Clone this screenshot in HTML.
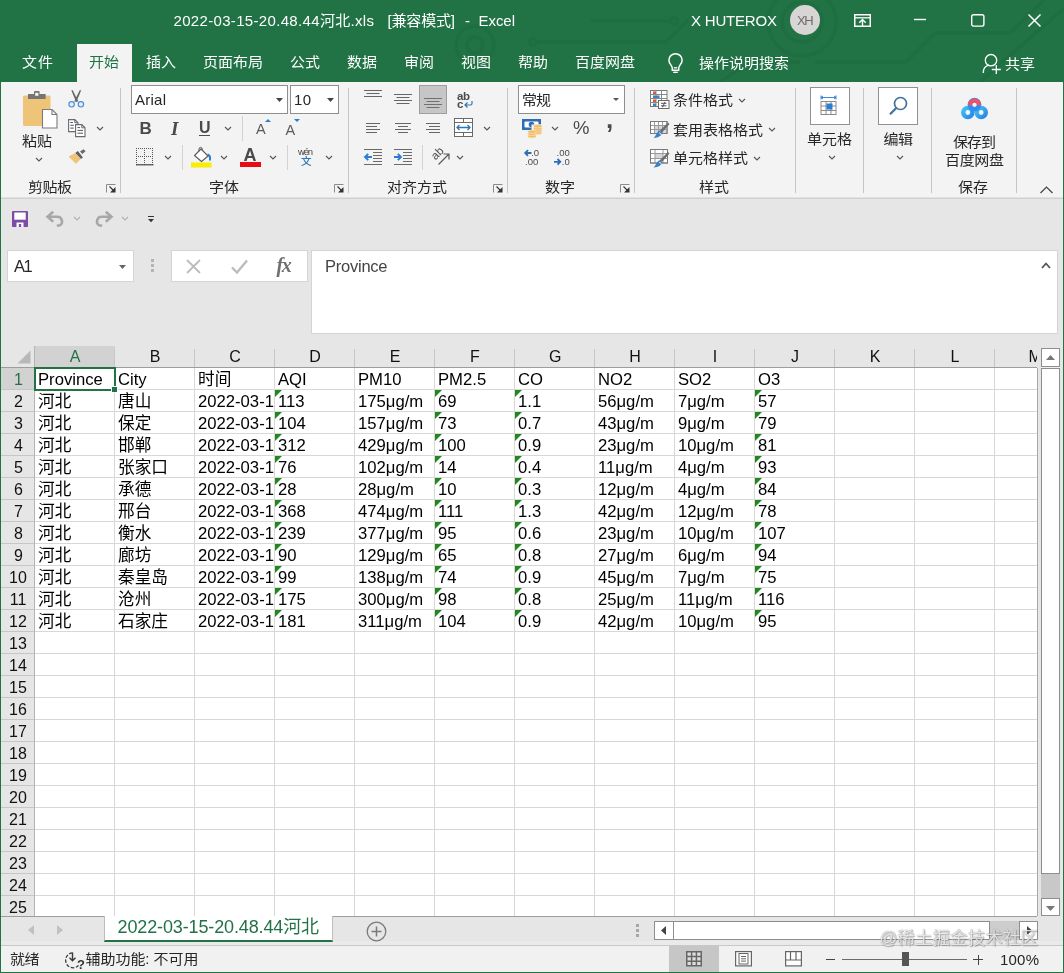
<!DOCTYPE html>
<html lang="zh-CN"><head><meta charset="utf-8"><title>Excel</title>
<style>
html,body{margin:0;padding:0;background:#217346;}
body{width:1064px;height:973px;overflow:hidden;font-family:"Liberation Sans","Noto Sans CJK SC",sans-serif;}
#app{will-change:transform;position:relative;width:1064px;height:973px;overflow:hidden;background:#e6e6e6;}
.a{position:absolute;box-sizing:border-box;display:block;}
.t{white-space:nowrap;}
svg.a{overflow:visible;}

</style></head>
<body>
<div id="app">
<div class="a " style="left:0px;top:0px;width:1064px;height:82px;background:#217346;"></div><div class="a " style="left:1px;top:82px;width:1063px;height:116px;background:#f3f3f3;"></div><div class="a " style="left:1px;top:197px;width:1063px;height:1px;background:#e2e2e2;"></div><div class="a " style="left:1px;top:198px;width:1063px;height:1px;background:#d0d0d0;"></div><div class="a " style="left:1px;top:199px;width:1063px;height:147px;background:#e6e6e6;"></div><div class="a " style="left:0px;top:0px;width:1px;height:973px;background:#217346;"></div><div class="a " style="left:0px;top:972px;width:1064px;height:1px;background:#217346;"></div><div class="a " style="left:1063px;top:82px;width:1px;height:891px;background:#217346;"></div><svg class="a" style="left:420px;top:0px;overflow:hidden;" width="644" height="82" viewBox="0 0 644 82"><g fill="none" stroke="#1c6a3e" stroke-width="3.500" opacity="0.550">
<circle cx="55" cy="45" r="19"/><circle cx="55" cy="45" r="8"/>
<circle cx="113" cy="42" r="3.500"/><path d="M117 42H246L268 20"/>
<path d="M170 21H250"/><circle cx="254" cy="21" r="3.500"/>
<circle cx="382" cy="22" r="34"/><circle cx="382" cy="22" r="20"/>
<path d="M395 62H486L515 33H590L624 0"/>
<path d="M300 82L330 62H380"/>
<path d="M560 82L644 8"/>
</g></svg><span class="a t" style="left:173.5px;top:10.0px;font-size:15px;line-height:21px;height:21px;color:#fff;letter-spacing:0.33px;">2022-03-15-20.48.44河北.xls</span><span class="a t" style="left:387.5px;top:10.0px;font-size:15px;line-height:21px;height:21px;color:#fff;letter-spacing:-0.17px;">[兼容模式]</span><span class="a t" style="left:465px;top:10.0px;font-size:15px;line-height:21px;height:21px;color:#fff;">-</span><span class="a t" style="left:478.5px;top:10.0px;font-size:15px;line-height:21px;height:21px;color:#fff;letter-spacing:-0.05px;">Excel</span><span class="a t" style="left:691px;top:10.0px;font-size:15px;line-height:21px;height:21px;color:#fff;letter-spacing:-0.19px;">X HUTEROX</span><div class="a " style="left:790px;top:5px;width:30px;height:30px;background:#d8d6d4;border-radius:50%;"></div><span class="a t" style="left:797px;top:11.5px;font-size:13px;line-height:18px;height:18px;color:#6e6c6a;letter-spacing:-1.50px;">XH</span><svg class="a" style="left:854px;top:13.5px;" width="17" height="13" viewBox="0 0 17 13"><rect x="0.750" y="0.750" width="15.500" height="11.500" fill="none" stroke="#fff" stroke-width="1.500"/><path d="M0.750 3.800H16.250" stroke="#fff" stroke-width="1.300"/><path d="M8.500 12V6M5.300 8.800L8.500 5.600L11.700 8.800" fill="none" stroke="#fff" stroke-width="1.400"/></svg><svg class="a" style="left:914px;top:18px;" width="12" height="3" viewBox="0 0 12 3"><path d="M0 1.500H12" stroke="#fff" stroke-width="1.400"/></svg><svg class="a" style="left:970.5px;top:13.5px;" width="14" height="13" viewBox="0 0 14 13"><rect x="0.700" y="0.700" width="12.200" height="11.400" rx="1.800" fill="none" stroke="#fff" stroke-width="1.400"/></svg><svg class="a" style="left:1028px;top:13.5px;" width="13" height="13" viewBox="0 0 13 13"><path d="M0.500 0.500L12.500 12.500M12.500 0.500L0.500 12.500" stroke="#fff" stroke-width="1.500"/></svg><div class="a " style="left:77px;top:44px;width:55px;height:38px;background:#f3f3f3;"></div><span class="a t" style="left:22px;top:51.0px;font-size:15px;line-height:21px;height:21px;color:#fff;letter-spacing:0.98px;transform:scaleY(0.930);">文件</span><span class="a t" style="left:89px;top:51.0px;font-size:15px;line-height:21px;height:21px;color:#217346;letter-spacing:-0.02px;transform:scaleY(0.930);">开始</span><span class="a t" style="left:146px;top:51.0px;font-size:15px;line-height:21px;height:21px;color:#fff;letter-spacing:-0.02px;transform:scaleY(0.930);">插入</span><span class="a t" style="left:203px;top:51.0px;font-size:15px;line-height:21px;height:21px;color:#fff;letter-spacing:-0.01px;transform:scaleY(0.930);">页面布局</span><span class="a t" style="left:290px;top:51.0px;font-size:15px;line-height:21px;height:21px;color:#fff;letter-spacing:-0.02px;transform:scaleY(0.930);">公式</span><span class="a t" style="left:347px;top:51.0px;font-size:15px;line-height:21px;height:21px;color:#fff;letter-spacing:-0.02px;transform:scaleY(0.930);">数据</span><span class="a t" style="left:404px;top:51.0px;font-size:15px;line-height:21px;height:21px;color:#fff;letter-spacing:-0.02px;transform:scaleY(0.930);">审阅</span><span class="a t" style="left:461px;top:51.0px;font-size:15px;line-height:21px;height:21px;color:#fff;letter-spacing:-0.02px;transform:scaleY(0.930);">视图</span><span class="a t" style="left:518px;top:51.0px;font-size:15px;line-height:21px;height:21px;color:#fff;letter-spacing:-0.02px;transform:scaleY(0.930);">帮助</span><span class="a t" style="left:575px;top:51.0px;font-size:15px;line-height:21px;height:21px;color:#fff;letter-spacing:-0.01px;transform:scaleY(0.930);">百度网盘</span><svg class="a" style="left:668px;top:53px;" width="15" height="20" viewBox="0 0 15 20"><path d="M7.500 0.800C3.800 0.800 0.900 3.600 0.900 7.200C0.900 9.600 2.200 11 3.300 12.600C4 13.600 4.300 14.600 4.300 15.600V17.200H10.700V15.600C10.700 14.600 11 13.600 11.700 12.600C12.800 11 14.100 9.600 14.100 7.200C14.100 3.600 11.200 0.800 7.500 0.800Z" fill="none" stroke="#fff" stroke-width="1.500"/><path d="M5.800 14.800h3.400" stroke="#fff" stroke-width="1.300"/><path d="M5.200 19.300h4.600" stroke="#fff" stroke-width="1.400"/></svg><span class="a t" style="left:699px;top:51.5px;font-size:15px;line-height:21px;height:21px;color:#fff;transform:scaleY(0.930);">操作说明搜索</span><svg class="a" style="left:982px;top:53px;" width="19" height="21" viewBox="0 0 19 21"><circle cx="9" cy="7.200" r="5.700" fill="none" stroke="#fff" stroke-width="1.300"/><path d="M1.200 20c0-4 2-6.800 5.300-7.800" fill="none" stroke="#fff" stroke-width="1.300"/><path d="M14.300 12v9M9.800 16.500h9" stroke="#fff" stroke-width="1.300"/></svg><span class="a t" style="left:1005px;top:52.5px;font-size:15px;line-height:21px;height:21px;color:#fff;letter-spacing:-0.02px;transform:scaleY(0.930);">共享</span><div class="a " style="left:120px;top:88px;width:1px;height:105px;background:#c6c6c6;"></div><div class="a " style="left:348px;top:88px;width:1px;height:105px;background:#c6c6c6;"></div><div class="a " style="left:507px;top:88px;width:1px;height:105px;background:#c6c6c6;"></div><div class="a " style="left:634px;top:88px;width:1px;height:105px;background:#c6c6c6;"></div><div class="a " style="left:795px;top:88px;width:1px;height:105px;background:#c6c6c6;"></div><div class="a " style="left:863px;top:88px;width:1px;height:105px;background:#c6c6c6;"></div><div class="a " style="left:931px;top:88px;width:1px;height:105px;background:#c6c6c6;"></div><div class="a " style="left:1016px;top:88px;width:1px;height:105px;background:#c6c6c6;"></div><div class="a " style="left:242px;top:116px;width:1px;height:25px;background:#d2d2d2;"></div><div class="a " style="left:182px;top:145px;width:1px;height:25px;background:#d2d2d2;"></div><div class="a " style="left:287px;top:145px;width:1px;height:25px;background:#d2d2d2;"></div><div class="a " style="left:422px;top:145px;width:1px;height:25px;background:#d2d2d2;"></div><span class="a t" style="left:28px;top:176.0px;font-size:15px;line-height:21px;height:21px;color:#262626;letter-spacing:-0.51px;transform:scaleY(0.930);">剪贴板</span><span class="a t" style="left:209px;top:176.0px;font-size:15px;line-height:21px;height:21px;color:#262626;letter-spacing:-0.02px;transform:scaleY(0.930);">字体</span><span class="a t" style="left:387px;top:176.0px;font-size:15px;line-height:21px;height:21px;color:#262626;letter-spacing:-0.01px;transform:scaleY(0.930);">对齐方式</span><span class="a t" style="left:545px;top:176.0px;font-size:15px;line-height:21px;height:21px;color:#262626;letter-spacing:-0.02px;transform:scaleY(0.930);">数字</span><span class="a t" style="left:699px;top:176.0px;font-size:15px;line-height:21px;height:21px;color:#262626;letter-spacing:-0.02px;transform:scaleY(0.930);">样式</span><span class="a t" style="left:958px;top:176.0px;font-size:15px;line-height:21px;height:21px;color:#262626;letter-spacing:-0.02px;transform:scaleY(0.930);">保存</span><svg class="a" style="left:106px;top:184px;" width="10" height="9" viewBox="0 0 10 9"><path d="M0.500 8.500V0.500H9.500" fill="none" stroke="#8a8a8a" stroke-width="1"/><path d="M3.500 2.500L8.500 7.500" fill="none" stroke="#333" stroke-width="1.100"/><path d="M9.500 3V8.500H4z" fill="#333"/></svg><svg class="a" style="left:334px;top:184px;" width="10" height="9" viewBox="0 0 10 9"><path d="M0.500 8.500V0.500H9.500" fill="none" stroke="#8a8a8a" stroke-width="1"/><path d="M3.500 2.500L8.500 7.500" fill="none" stroke="#333" stroke-width="1.100"/><path d="M9.500 3V8.500H4z" fill="#333"/></svg><svg class="a" style="left:493px;top:184px;" width="10" height="9" viewBox="0 0 10 9"><path d="M0.500 8.500V0.500H9.500" fill="none" stroke="#8a8a8a" stroke-width="1"/><path d="M3.500 2.500L8.500 7.500" fill="none" stroke="#333" stroke-width="1.100"/><path d="M9.500 3V8.500H4z" fill="#333"/></svg><svg class="a" style="left:620px;top:184px;" width="10" height="9" viewBox="0 0 10 9"><path d="M0.500 8.500V0.500H9.500" fill="none" stroke="#8a8a8a" stroke-width="1"/><path d="M3.500 2.500L8.500 7.500" fill="none" stroke="#333" stroke-width="1.100"/><path d="M9.500 3V8.500H4z" fill="#333"/></svg><svg class="a" style="left:23px;top:91px;" width="36" height="40" viewBox="0 0 36 40"><rect x="0" y="4.500" width="27.500" height="30.500" rx="1.500" fill="#eec478"/>
<path d="M5 3h6v-2a1 1 0 0 1 1-1h3.600a1 1 0 0 1 1 1v2h6v5h-17.600z" fill="#757575"/>
<rect x="12.200" y="1.800" width="3.200" height="3" fill="#f3f3f3"/>
<path d="M19.500 18.500h9.500l5 5v13.500h-14.500z" fill="#fff" stroke="#7a7a7a" stroke-width="1.100"/>
<path d="M29 18.500v5h5" fill="none" stroke="#7a7a7a" stroke-width="1.100"/></svg><span class="a t" style="left:22px;top:129.5px;font-size:15px;line-height:21px;height:21px;color:#262626;letter-spacing:-0.02px;transform:scaleY(0.930);">粘贴</span><svg class="a" style="left:34.5px;top:156.5px;" width="8" height="5" viewBox="0 0 8 5"><path d="M1 1 L4.0 4 L7 1" fill="none" stroke="#555" stroke-width="1.1"/></svg><svg class="a" style="left:68px;top:90px;" width="17" height="19" viewBox="0 0 17 19"><path d="M3.300 0.300L4.800 0.300L10.300 11.500L8 11.800z" fill="#666"/><path d="M13.200 0.300L11.700 0.300L6.200 11.500L8.500 11.800z" fill="#666"/>
<circle cx="3.600" cy="14.300" r="2.700" fill="#e3eefa" stroke="#4f8fd6" stroke-width="1.200"/>
<circle cx="12.900" cy="14.300" r="2.700" fill="#e3eefa" stroke="#4f8fd6" stroke-width="1.200"/></svg><svg class="a" style="left:68px;top:119px;" width="18" height="18" viewBox="0 0 18 18"><path d="M0.600 0.600h6.200l3.200 3.200v8.800h-9.400z" fill="#fff" stroke="#6a6a6a" stroke-width="1.100"/>
<path d="M6.800 0.600v3.200h3.200" fill="none" stroke="#6a6a6a" stroke-width="1"/>
<path d="M2.300 3.500h2.600M2.300 6.300h3.500M2.300 9.100h3.500" stroke="#44546a" stroke-width="1"/>
<path d="M7.600 5.600h6.200l3.200 3.200v8.800h-9.400z" fill="#fff" stroke="#6a6a6a" stroke-width="1.100"/>
<path d="M13.800 5.600v3.200h3.200" fill="none" stroke="#6a6a6a" stroke-width="1"/>
<path d="M9.500 8.600h2.600M9.500 11.400h5.500M9.500 14.200h5.500" stroke="#44546a" stroke-width="1"/></svg><svg class="a" style="left:96.0px;top:125.5px;" width="8" height="5" viewBox="0 0 8 5"><path d="M1 1 L4.0 4 L7 1" fill="none" stroke="#555" stroke-width="1.1"/></svg><svg class="a" style="left:68px;top:149px;" width="18" height="16" viewBox="0 0 18 16"><path d="M12 2.600L15.500 0.200L17.600 2.300L14.300 5z" fill="#6a6a6a"/>
<path d="M7.200 4.100L9.900 2L14.900 8.600L12.900 10.100z" fill="#5f5f5f"/>
<path d="M7.200 4.100L12.900 10.100L7.800 14.800L0.600 7.400z" fill="#eec478"/></svg><div class="a " style="left:131px;top:85px;width:157px;height:29px;background:#fff;border:1px solid #8e8e8e;"></div><span class="a t" style="left:135px;top:89.0px;font-size:15px;line-height:21px;height:21px;color:#262626;letter-spacing:0.25px;">Arial</span><svg class="a" style="left:275.5px;top:97.5px;" width="7" height="4" viewBox="0 0 7 4"><path d="M0 0 L7 0 L3.5 4Z" fill="#444"/></svg><div class="a " style="left:290px;top:85px;width:49px;height:29px;background:#fff;border:1px solid #8e8e8e;"></div><span class="a t" style="left:294px;top:89.0px;font-size:15px;line-height:21px;height:21px;color:#262626;letter-spacing:0.31px;">10</span><svg class="a" style="left:326.5px;top:97.5px;" width="7" height="4" viewBox="0 0 7 4"><path d="M0 0 L7 0 L3.5 4Z" fill="#444"/></svg><span class="a t" style="left:139.5px;top:117.0px;font-size:17px;line-height:24px;height:24px;color:#4a4a4a;font-weight:bold;">B</span><span class="a t" style="left:171px;top:115.0px;font-size:19px;line-height:27px;height:27px;color:#4a4a4a;font-weight:bold;font-style:italic;font-family:'Liberation Serif',serif;">I</span><span class="a t" style="left:199px;top:117.0px;font-size:16px;line-height:22px;height:22px;color:#4a4a4a;font-weight:bold;">U</span><div class="a " style="left:199px;top:135px;width:11px;height:1.3px;background:#4a4a4a;"></div><svg class="a" style="left:224.0px;top:125.5px;" width="8" height="5" viewBox="0 0 8 5"><path d="M1 1 L4.0 4 L7 1" fill="none" stroke="#555" stroke-width="1.1"/></svg><span class="a t" style="left:256px;top:119.0px;font-size:14.5px;line-height:20px;height:20px;color:#5a5a5a;">A</span><svg class="a" style="left:264.5px;top:119px;" width="6" height="3" viewBox="0 0 6 3"><path d="M0 3L3 0L6 3z" fill="#2b7cd3"/></svg><span class="a t" style="left:285.5px;top:120.0px;font-size:14.5px;line-height:20px;height:20px;color:#5a5a5a;">A</span><svg class="a" style="left:293.5px;top:119px;" width="6" height="3" viewBox="0 0 6 3"><path d="M0 0L3 3L6 0z" fill="#2b7cd3"/></svg><svg class="a" style="left:136px;top:147.5px;" width="18" height="18" viewBox="0 0 18 18"><path d="M0.500 0V17M8.500 0V17M16.500 0V17M0 0.500H17M0 8.500H17" fill="none" stroke="#555" stroke-width="1" stroke-dasharray="1 1"/><path d="M0 16.800H17.500" stroke="#444" stroke-width="1.200"/></svg><svg class="a" style="left:164.0px;top:154.5px;" width="8" height="5" viewBox="0 0 8 5"><path d="M1 1 L4.0 4 L7 1" fill="none" stroke="#555" stroke-width="1.1"/></svg><svg class="a" style="left:191px;top:146.5px;" width="21" height="21" viewBox="0 0 21 21"><rect x="0" y="15.500" width="20.500" height="5" fill="#f8ee00"/>
<path d="M3.500 8.500L10 2L17 9L10.500 14.500z" fill="#fff" stroke="#5a5a5a" stroke-width="1.100" stroke-linejoin="round"/>
<path d="M8 4.300V2a1.600 1.600 0 0 1 3.200 0V3" fill="none" stroke="#5a5a5a" stroke-width="1"/>
<path d="M16.500 7.500c2.500 1 3 3.500 2.300 6" fill="none" stroke="#2b7cd3" stroke-width="2"/></svg><svg class="a" style="left:220.0px;top:154.5px;" width="8" height="5" viewBox="0 0 8 5"><path d="M1 1 L4.0 4 L7 1" fill="none" stroke="#555" stroke-width="1.1"/></svg><span class="a t" style="left:243.5px;top:142.5px;font-size:18px;line-height:25px;height:25px;color:#4a4a4a;font-weight:bold;">A</span><div class="a " style="left:240px;top:162px;width:20.5px;height:5px;background:#ea0a14;"></div><svg class="a" style="left:269.0px;top:154.5px;" width="8" height="5" viewBox="0 0 8 5"><path d="M1 1 L4.0 4 L7 1" fill="none" stroke="#555" stroke-width="1.1"/></svg><span class="a t" style="left:298px;top:145.0px;font-size:9.5px;line-height:13px;height:13px;color:#444;letter-spacing:-1.22px;">wén</span><span class="a t" style="left:301px;top:154.0px;font-size:10.5px;line-height:15px;height:15px;color:#2e75b6;font-weight:500;">文</span><svg class="a" style="left:325.0px;top:154.5px;" width="8" height="5" viewBox="0 0 8 5"><path d="M1 1 L4.0 4 L7 1" fill="none" stroke="#555" stroke-width="1.1"/></svg><svg class="a" style="left:364px;top:90px;" width="18" height="9" viewBox="0 0 18 9"><path d="M0.0 0.5H18.0" stroke="#666" stroke-width="1"/><path d="M2.5 3.5H15.5" stroke="#666" stroke-width="1"/><path d="M0.0 6.5H18.0" stroke="#666" stroke-width="1"/></svg><svg class="a" style="left:394px;top:94px;" width="18" height="12" viewBox="0 0 18 12"><path d="M0.0 0.5H18.0" stroke="#666" stroke-width="1"/><path d="M2.5 3.5H15.5" stroke="#666" stroke-width="1"/><path d="M0.0 6.5H18.0" stroke="#666" stroke-width="1"/><path d="M2.5 9.5H15.5" stroke="#666" stroke-width="1"/></svg><div class="a " style="left:419px;top:85px;width:28px;height:29px;background:#c6c6c6;border:1px solid #9e9e9e;"></div><svg class="a" style="left:424px;top:98px;" width="18" height="12" viewBox="0 0 18 12"><path d="M0.0 0.5H18.0" stroke="#707070" stroke-width="1"/><path d="M2.5 3.5H15.5" stroke="#707070" stroke-width="1"/><path d="M0.0 6.5H18.0" stroke="#707070" stroke-width="1"/><path d="M2.5 9.5H15.5" stroke="#707070" stroke-width="1"/></svg><span class="a t" style="left:457px;top:87.5px;font-size:11.5px;line-height:16px;height:16px;color:#4a4a4a;font-weight:bold;letter-spacing:-0.42px;">ab</span><span class="a t" style="left:457px;top:95.5px;font-size:11.5px;line-height:16px;height:16px;color:#4a4a4a;font-weight:bold;">c</span><svg class="a" style="left:464px;top:100.5px;" width="9" height="7" viewBox="0 0 9 7"><path d="M8 0v2.500a1.500 1.500 0 0 1-1.500 1.500H1.200M3.500 1.500L1 4L3.500 6.500" fill="none" stroke="#2e75b6" stroke-width="1.200"/></svg><svg class="a" style="left:366px;top:123px;" width="14" height="12" viewBox="0 0 14 12"><path d="M0 0.5H14" stroke="#666" stroke-width="1"/><path d="M0 3.5H11" stroke="#666" stroke-width="1"/><path d="M0 6.5H14" stroke="#666" stroke-width="1"/><path d="M0 9.5H11" stroke="#666" stroke-width="1"/></svg><svg class="a" style="left:395px;top:123px;" width="16" height="12" viewBox="0 0 16 12"><path d="M0.0 0.5H16.0" stroke="#666" stroke-width="1"/><path d="M3.0 3.5H13.0" stroke="#666" stroke-width="1"/><path d="M0.0 6.5H16.0" stroke="#666" stroke-width="1"/><path d="M3.0 9.5H13.0" stroke="#666" stroke-width="1"/></svg><svg class="a" style="left:426px;top:123px;" width="14" height="12" viewBox="0 0 14 12"><path d="M0 0.5H14" stroke="#666" stroke-width="1"/><path d="M3 3.5H14" stroke="#666" stroke-width="1"/><path d="M0 6.5H14" stroke="#666" stroke-width="1"/><path d="M3 9.5H14" stroke="#666" stroke-width="1"/></svg><svg class="a" style="left:454px;top:118px;" width="19" height="19" viewBox="0 0 19 19"><rect x="0.500" y="0.500" width="18" height="18" fill="#fff" stroke="#6a6a6a" stroke-width="1"/>
<path d="M0.500 4.500h18M0.500 14.500h18M9.500 0.500v4M9.500 14.500v4" stroke="#6a6a6a" stroke-width="1"/>
<path d="M3 9.500h13M5.500 7L3 9.500L5.500 12M13.500 7L16 9.500L13.500 12" fill="none" stroke="#2e75b6" stroke-width="1.300"/></svg><svg class="a" style="left:483.0px;top:125.5px;" width="8" height="5" viewBox="0 0 8 5"><path d="M1 1 L4.0 4 L7 1" fill="none" stroke="#555" stroke-width="1.1"/></svg><svg class="a" style="left:364px;top:148.5px;" width="18" height="16" viewBox="0 0 18 16"><path d="M0 0.500h18M9 3.500h9M9 6.500h9M9 9.500h9M9 12.500h9M0 15.500h18" stroke="#6a6a6a" stroke-width="1"/>
<path d="M8 8H1M4.200 4.800L1 8L4.200 11.200" fill="none" stroke="#2b7cd3" stroke-width="1.900"/></svg><svg class="a" style="left:394px;top:148.5px;" width="18" height="16" viewBox="0 0 18 16"><path d="M0 0.500h18M9 3.500h9M9 6.500h9M9 9.500h9M9 12.500h9M0 15.500h18" stroke="#6a6a6a" stroke-width="1"/>
<path d="M0 8H7M3.800 4.800L7 8L3.800 11.200" fill="none" stroke="#2b7cd3" stroke-width="1.900"/></svg><svg class="a" style="left:430px;top:147px;" width="20" height="20" viewBox="0 0 20 20"><text x="0" y="0" font-size="11.500" fill="#4a4a4a" transform="translate(5.500 13.500) rotate(-45)" font-family="Liberation Sans,sans-serif">ab</text>
<path d="M8.500 17.500L18.500 7.500M13.500 7H19V12.500" fill="none" stroke="#5a5a5a" stroke-width="1.200"/></svg><svg class="a" style="left:456.0px;top:154.5px;" width="8" height="5" viewBox="0 0 8 5"><path d="M1 1 L4.0 4 L7 1" fill="none" stroke="#555" stroke-width="1.1"/></svg><div class="a " style="left:518px;top:85px;width:107px;height:29px;background:#fff;border:1px solid #8e8e8e;"></div><span class="a t" style="left:522px;top:89.0px;font-size:15px;line-height:21px;height:21px;color:#262626;letter-spacing:-1.02px;transform:scaleY(0.930);">常规</span><svg class="a" style="left:613.0px;top:98.0px;" width="6" height="3" viewBox="0 0 6 3"><path d="M0 0 L6 0 L3.0 3Z" fill="#555"/></svg><svg class="a" style="left:522px;top:119px;" width="21" height="20" viewBox="0 0 21 20"><rect x="0" y="0" width="19" height="11" fill="#2e6db5"/>
<rect x="2.500" y="2.500" width="14" height="6" rx="1" fill="#fff"/>
<ellipse cx="9.500" cy="5.500" rx="2.800" ry="2.800" fill="#2e6db5"/>
<rect x="9.500" y="5.500" width="11" height="6" fill="#f3f3f3"/><ellipse cx="15.7" cy="13.8" rx="4.200" ry="1.700" fill="#f2bd69" stroke="#f9e3bd" stroke-width="0.700"/><ellipse cx="15.7" cy="11.600000000000001" rx="4.200" ry="1.700" fill="#f2bd69" stroke="#f9e3bd" stroke-width="0.700"/><ellipse cx="15.7" cy="9.4" rx="4.200" ry="1.700" fill="#f2bd69" stroke="#f9e3bd" stroke-width="0.700"/><ellipse cx="15.7" cy="7.2" rx="4.200" ry="1.700" fill="#f2bd69" stroke="#f9e3bd" stroke-width="0.700"/><ellipse cx="10" cy="17.2" rx="4.200" ry="1.700" fill="#f2bd69" stroke="#f9e3bd" stroke-width="0.700"/><ellipse cx="10" cy="15.0" rx="4.200" ry="1.700" fill="#f2bd69" stroke="#f9e3bd" stroke-width="0.700"/><ellipse cx="10" cy="12.799999999999999" rx="4.200" ry="1.700" fill="#f2bd69" stroke="#f9e3bd" stroke-width="0.700"/></svg><svg class="a" style="left:550.5px;top:126.0px;" width="8" height="5" viewBox="0 0 8 5"><path d="M1 1 L4.0 4 L7 1" fill="none" stroke="#555" stroke-width="1.1"/></svg><span class="a t" style="left:573px;top:115.0px;font-size:18.5px;line-height:26px;height:26px;color:#4a4a4a;">%</span><span class="a t" style="left:606px;top:101.0px;font-size:26px;line-height:36px;height:36px;color:#4a4a4a;font-weight:bold;">,</span><svg class="a" style="left:524px;top:149px;" width="17" height="18" viewBox="0 0 17 18"><path d="M7.500 4H1.200M4 1.200L1.200 4L4 6.800" fill="none" stroke="#2e6db5" stroke-width="1.800"/>
<text x="7.200" y="6.800" font-size="9.500" fill="#4a4a4a" font-family="Liberation Sans,sans-serif">.0</text>
<text x="1" y="16" font-size="9.500" fill="#4a4a4a" font-family="Liberation Sans,sans-serif">.00</text></svg><svg class="a" style="left:554px;top:149px;" width="17" height="18" viewBox="0 0 17 18"><text x="2.500" y="6.800" font-size="9.500" fill="#4a4a4a" font-family="Liberation Sans,sans-serif">.00</text>
<path d="M0 12.800H6.300M3.500 10L6.300 12.800L3.500 15.600" fill="none" stroke="#2e6db5" stroke-width="1.800"/>
<text x="7.800" y="16" font-size="9.500" fill="#4a4a4a" font-family="Liberation Sans,sans-serif">.0</text></svg><svg class="a" style="left:650px;top:90px;" width="20" height="19" viewBox="0 0 20 19"><rect x="0.500" y="0.500" width="16.500" height="16" fill="#fff" stroke="#7a7a7a" stroke-width="1"/>
<path d="M0.500 4.500h16.500M0.500 8.500h16.500M0.500 12.500h16.500M6 0.500v16M11.500 0.500v16" stroke="#8a8a8a" stroke-width="1"/>
<rect x="3" y="1.500" width="3" height="2.500" fill="#d9593a"/><rect x="3" y="5.500" width="6.500" height="2.500" fill="#3f7fc1"/><rect x="3" y="9.500" width="3" height="2.500" fill="#d9593a"/><rect x="3" y="13.500" width="3" height="2.500" fill="#3f7fc1"/>
<rect x="8.500" y="10.500" width="10.500" height="8" fill="#fff" stroke="#6a6a6a" stroke-width="1"/>
<path d="M11 13.300h5.500M11 15.800h5.500M15 11.800L12.500 17.300" stroke="#444" stroke-width="0.900"/></svg><span class="a t" style="left:673px;top:89.0px;font-size:15px;line-height:21px;height:21px;color:#262626;letter-spacing:-0.01px;transform:scaleY(0.930);">条件格式</span><svg class="a" style="left:738.0px;top:97.5px;" width="8" height="5" viewBox="0 0 8 5"><path d="M1 1 L4.0 4 L7 1" fill="none" stroke="#555" stroke-width="1.1"/></svg><svg class="a" style="left:650px;top:121px;" width="21" height="18" viewBox="0 0 21 18"><rect x="0.500" y="0.500" width="16.500" height="12" fill="#fff" stroke="#7a7a7a" stroke-width="1"/>
<rect x="5" y="4.500" width="11.500" height="7.500" fill="#d3d7dd"/>
<path d="M0.500 4.500h16.500M0.500 8.500h16.500M4.500 0.500v12M8.500 0.500v12M12.500 0.500v12" stroke="#9a9a9a" stroke-width="1"/>
<rect x="0.500" y="0.500" width="16.500" height="12" fill="none" stroke="#7a7a7a" stroke-width="1"/><path d="M18.0 1.5L19.5 3.0L12.0 11.5L9.5 10.0z" fill="#6e6e6e"/>
<path d="M9.5 9.7L12.3 11.7C12.0 14.5 8.5 16.5 3.5 17.0C6.0 15.0 6.5 11.0 9.5 9.7z" fill="#3f7fc1"/>
<path d="M9.0 12.0a1.600 1.600 0 0 1 2 2" fill="none" stroke="#f3f3f3" stroke-width="1"/></svg><span class="a t" style="left:673px;top:118.5px;font-size:15px;line-height:21px;height:21px;color:#262626;transform:scaleY(0.930);">套用表格格式</span><svg class="a" style="left:768.0px;top:126.5px;" width="8" height="5" viewBox="0 0 8 5"><path d="M1 1 L4.0 4 L7 1" fill="none" stroke="#555" stroke-width="1.1"/></svg><svg class="a" style="left:650px;top:148.5px;" width="21" height="19" viewBox="0 0 21 19"><rect x="0.500" y="0.500" width="17" height="13.500" fill="#fff" stroke="#7a7a7a" stroke-width="1"/>
<rect x="5" y="4.500" width="8" height="5" fill="#d3d7dd"/>
<path d="M0.500 4.500h17M0.500 9.500h17M5 0.500v13.500M13 0.500v13.500" stroke="#9a9a9a" stroke-width="1"/>
<rect x="0.500" y="0.500" width="17" height="13.500" fill="none" stroke="#7a7a7a" stroke-width="1"/><path d="M18.0 3L19.5 4.5L12.0 13L9.5 11.5z" fill="#6e6e6e"/>
<path d="M9.5 11.2L12.3 13.2C12.0 16 8.5 18 3.5 18.5C6.0 16.5 6.5 12.5 9.5 11.2z" fill="#3f7fc1"/>
<path d="M9.0 13.5a1.600 1.600 0 0 1 2 2" fill="none" stroke="#f3f3f3" stroke-width="1"/></svg><span class="a t" style="left:673px;top:147.0px;font-size:15px;line-height:21px;height:21px;color:#262626;transform:scaleY(0.930);">单元格样式</span><svg class="a" style="left:753.0px;top:155.5px;" width="8" height="5" viewBox="0 0 8 5"><path d="M1 1 L4.0 4 L7 1" fill="none" stroke="#555" stroke-width="1.1"/></svg><div class="a " style="left:810px;top:87px;width:40px;height:38px;background:#fff;border:1px solid #919191;"></div><svg class="a" style="left:820px;top:95px;" width="20" height="22" viewBox="0 0 20 22"><path d="M1 2.500h15M1 0.500v4M16 0.500v4M3 1L1 2.500L3 4M14 1L16 2.500L14 4" fill="none" stroke="#2b7cd3" stroke-width="0.900"/>
<rect x="1" y="6.500" width="15" height="13" fill="#fff" stroke="#8a8a8a" stroke-width="1"/>
<path d="M1 11h15M1 15.500h15M6 6.500v13M11 6.500v13" stroke="#8a8a8a" stroke-width="1"/>
<rect x="6.500" y="8.500" width="6" height="6" fill="#2b7cd3"/></svg><span class="a t" style="left:807px;top:128.0px;font-size:15px;line-height:21px;height:21px;color:#262626;letter-spacing:-0.01px;transform:scaleY(0.930);">单元格</span><svg class="a" style="left:828.0px;top:155.0px;" width="8" height="5" viewBox="0 0 8 5"><path d="M1 1 L4.0 4 L7 1" fill="none" stroke="#555" stroke-width="1.1"/></svg><div class="a " style="left:878px;top:87px;width:40px;height:38px;background:#fff;border:1px solid #919191;"></div><svg class="a" style="left:889px;top:96px;" width="18" height="20" viewBox="0 0 18 20"><circle cx="11.500" cy="7.500" r="6" fill="none" stroke="#41719c" stroke-width="1.700"/><path d="M7.300 12L1 18.300" stroke="#41719c" stroke-width="2.200"/></svg><span class="a t" style="left:883.5px;top:128.0px;font-size:15px;line-height:21px;height:21px;color:#262626;letter-spacing:-0.52px;transform:scaleY(0.930);">编辑</span><svg class="a" style="left:896.0px;top:155.0px;" width="8" height="5" viewBox="0 0 8 5"><path d="M1 1 L4.0 4 L7 1" fill="none" stroke="#555" stroke-width="1.1"/></svg><svg class="a" style="left:961px;top:97px;" width="27" height="23" viewBox="0 0 27 23"><defs><linearGradient id="bd" x1="0" y1="0" x2="1" y2="1"><stop offset="0" stop-color="#3ec3f0"/><stop offset="1" stop-color="#2b86e8"/></linearGradient></defs>
<circle cx="6.800" cy="15.500" r="4.600" fill="none" stroke="url(#bd)" stroke-width="4.400"/>
<circle cx="20.200" cy="15.500" r="4.600" fill="none" stroke="url(#bd)" stroke-width="4.400"/>
<circle cx="13.500" cy="7.600" r="4.600" fill="none" stroke="#2f8ff0" stroke-width="4.400"/>
<path d="M8.900 8.200a4.600 4.600 0 0 1 9.200 0" fill="none" stroke="#ef5166" stroke-width="4.400"/>
<path d="M9.600 12.500L12 9.800M17.400 12.500L15 9.800" stroke="#2f8ff0" stroke-width="3.500"/></svg><span class="a t" style="left:953px;top:130.5px;font-size:15px;line-height:21px;height:21px;color:#262626;letter-spacing:-1.01px;transform:scaleY(0.930);">保存到</span><span class="a t" style="left:945px;top:149.0px;font-size:15px;line-height:21px;height:21px;color:#262626;letter-spacing:-0.34px;transform:scaleY(0.930);">百度网盘</span><svg class="a" style="left:1040px;top:186px;" width="13" height="8" viewBox="0 0 13 8"><path d="M0.500 7L6.500 1L12.500 7" fill="none" stroke="#444" stroke-width="1.200"/></svg><svg class="a" style="left:12px;top:211px;" width="16" height="16" viewBox="0 0 16 16"><rect x="0" y="0" width="16" height="16" rx="0.800" fill="#7d4ba3"/>
<rect x="2.300" y="1.500" width="11.400" height="7.200" fill="#fff"/>
<rect x="4.500" y="11.500" width="7" height="4.500" fill="#fff"/><rect x="6.800" y="13" width="2.400" height="3" fill="#7d4ba3"/></svg><svg class="a" style="left:46px;top:211px;" width="19" height="16" viewBox="0 0 19 16"><path d="M3 5.800h8.500a4.600 4.600 0 0 1 2.500 8.400l-3.200 0.600" fill="none" stroke="#a8a8a8" stroke-width="2.600" stroke-linejoin="round"/>
<path d="M7.200 0.800L1.500 5.800L7.200 10.800" fill="none" stroke="#a8a8a8" stroke-width="2.600"/></svg><svg class="a" style="left:72.5px;top:216.0px;" width="8" height="5" viewBox="0 0 8 5"><path d="M1 1 L4.0 4 L7 1" fill="none" stroke="#b0b0b0" stroke-width="1.1"/></svg><svg class="a" style="left:94px;top:211px;" width="19" height="16" viewBox="0 0 19 16"><path d="M16 5.800h-8.500a4.600 4.600 0 0 0 -2.500 8.400l3.200 0.600" fill="none" stroke="#a8a8a8" stroke-width="2.600" stroke-linejoin="round"/>
<path d="M11.800 0.800L17.500 5.800L11.800 10.800" fill="none" stroke="#a8a8a8" stroke-width="2.600"/></svg><svg class="a" style="left:121.0px;top:216.0px;" width="8" height="5" viewBox="0 0 8 5"><path d="M1 1 L4.0 4 L7 1" fill="none" stroke="#b0b0b0" stroke-width="1.1"/></svg><div class="a " style="left:147.5px;top:215.5px;width:6px;height:1.2px;background:#333;"></div><svg class="a" style="left:147.5px;top:218.70000000000002px;" width="6" height="3.2" viewBox="0 0 6 3.2"><path d="M0 0 L6 0 L3.0 3.2Z" fill="#333"/></svg><div class="a " style="left:7px;top:250px;width:127px;height:32px;background:#fff;border:1px solid #d4d4d4;"></div><span class="a t" style="left:14px;top:255.0px;font-size:16.5px;line-height:23px;height:23px;color:#262626;letter-spacing:-1.50px;">A1</span><svg class="a" style="left:119.0px;top:264.5px;" width="7" height="4" viewBox="0 0 7 4"><path d="M0 0 L7 0 L3.5 4Z" fill="#666"/></svg><div class="a " style="left:151px;top:259px;width:3px;height:3px;background:#b4b4b4;"></div><div class="a " style="left:151px;top:264px;width:3px;height:3px;background:#b4b4b4;"></div><div class="a " style="left:151px;top:269px;width:3px;height:3px;background:#b4b4b4;"></div><div class="a " style="left:171px;top:250px;width:137px;height:32px;background:#fff;border:1px solid #d4d4d4;"></div><svg class="a" style="left:186px;top:259px;" width="15" height="15" viewBox="0 0 15 15"><path d="M1 1L14 14M14 1L1 14" stroke="#bcbcbc" stroke-width="1.800"/></svg><svg class="a" style="left:231px;top:259px;" width="17" height="15" viewBox="0 0 17 15"><path d="M1 8.500L6 13.500L16 1.500" fill="none" stroke="#bcbcbc" stroke-width="2.400"/></svg><span class="a t" style="left:276.5px;top:251.0px;font-size:20px;line-height:28px;height:28px;color:#707070;font-weight:bold;font-style:italic;font-family:'Liberation Serif',serif;letter-spacing:-1.50px;">fx</span><div class="a " style="left:311px;top:250px;width:747px;height:84px;background:#fff;border:1px solid #d4d4d4;"></div><span class="a t" style="left:325px;top:254.5px;font-size:16.5px;line-height:23px;height:23px;color:#444;letter-spacing:-0.24px;">Province</span><svg class="a" style="left:1041px;top:261.5px;" width="10" height="7" viewBox="0 0 10 7"><path d="M1 6L5 1.500L9 6" fill="none" stroke="#555" stroke-width="1.800"/></svg><div class="a " style="left:1px;top:346px;width:1036px;height:570px;background:#fff;"></div><div class="a " style="left:1px;top:346px;width:1036px;height:21px;background:#e6e6e6;"></div><div class="a " style="left:1px;top:367px;width:33px;height:549px;background:#e6e6e6;"></div><div class="a " style="left:35px;top:346px;width:80px;height:21px;background:#d2d2d2;"></div><div class="a " style="left:1px;top:368px;width:33px;height:22px;background:#d2d2d2;"></div><div class="a " style="left:1px;top:367px;width:1036px;height:1px;background:#9d9d9d;"></div><div class="a " style="left:34px;top:346px;width:1px;height:570px;background:#b4b4b4;"></div><svg class="a" style="left:17px;top:350px;" width="14" height="14" viewBox="0 0 14 14"><path d="M13.500 0.500V13.500H0.500z" fill="#b8b8b8"/></svg><span class="a t" style="left:69.0px;top:346.0px;font-size:16px;line-height:22px;height:22px;color:#217346;width:12px;text-align:center;">A</span><div class="a " style="left:114px;top:349px;width:1px;height:18px;background:#c6c6c6;"></div><span class="a t" style="left:149.0px;top:346.0px;font-size:16px;line-height:22px;height:22px;color:#111;width:12px;text-align:center;">B</span><div class="a " style="left:194px;top:349px;width:1px;height:18px;background:#c6c6c6;"></div><span class="a t" style="left:229.0px;top:346.0px;font-size:16px;line-height:22px;height:22px;color:#111;width:12px;text-align:center;">C</span><div class="a " style="left:274px;top:349px;width:1px;height:18px;background:#c6c6c6;"></div><span class="a t" style="left:309.0px;top:346.0px;font-size:16px;line-height:22px;height:22px;color:#111;width:12px;text-align:center;">D</span><div class="a " style="left:354px;top:349px;width:1px;height:18px;background:#c6c6c6;"></div><span class="a t" style="left:389.0px;top:346.0px;font-size:16px;line-height:22px;height:22px;color:#111;width:12px;text-align:center;">E</span><div class="a " style="left:434px;top:349px;width:1px;height:18px;background:#c6c6c6;"></div><span class="a t" style="left:469.0px;top:346.0px;font-size:16px;line-height:22px;height:22px;color:#111;width:12px;text-align:center;">F</span><div class="a " style="left:514px;top:349px;width:1px;height:18px;background:#c6c6c6;"></div><span class="a t" style="left:549.0px;top:346.0px;font-size:16px;line-height:22px;height:22px;color:#111;width:12px;text-align:center;">G</span><div class="a " style="left:594px;top:349px;width:1px;height:18px;background:#c6c6c6;"></div><span class="a t" style="left:629.0px;top:346.0px;font-size:16px;line-height:22px;height:22px;color:#111;width:12px;text-align:center;">H</span><div class="a " style="left:674px;top:349px;width:1px;height:18px;background:#c6c6c6;"></div><span class="a t" style="left:709.0px;top:346.0px;font-size:16px;line-height:22px;height:22px;color:#111;width:12px;text-align:center;">I</span><div class="a " style="left:754px;top:349px;width:1px;height:18px;background:#c6c6c6;"></div><span class="a t" style="left:789.0px;top:346.0px;font-size:16px;line-height:22px;height:22px;color:#111;width:12px;text-align:center;">J</span><div class="a " style="left:834px;top:349px;width:1px;height:18px;background:#c6c6c6;"></div><span class="a t" style="left:869.0px;top:346.0px;font-size:16px;line-height:22px;height:22px;color:#111;width:12px;text-align:center;">K</span><div class="a " style="left:914px;top:349px;width:1px;height:18px;background:#c6c6c6;"></div><span class="a t" style="left:949.0px;top:346.0px;font-size:16px;line-height:22px;height:22px;color:#111;width:12px;text-align:center;">L</span><div class="a " style="left:994px;top:349px;width:1px;height:18px;background:#c6c6c6;"></div><span class="a t" style="left:1028.5px;top:346.0px;font-size:16px;line-height:22px;height:22px;color:#111;width:8.500px;overflow:hidden;">M</span><div class="a " style="left:114px;top:368px;width:1px;height:548px;background:#d8d8d8;"></div><div class="a " style="left:194px;top:368px;width:1px;height:548px;background:#d8d8d8;"></div><div class="a " style="left:274px;top:368px;width:1px;height:548px;background:#d8d8d8;"></div><div class="a " style="left:354px;top:368px;width:1px;height:548px;background:#d8d8d8;"></div><div class="a " style="left:434px;top:368px;width:1px;height:548px;background:#d8d8d8;"></div><div class="a " style="left:514px;top:368px;width:1px;height:548px;background:#d8d8d8;"></div><div class="a " style="left:594px;top:368px;width:1px;height:548px;background:#d8d8d8;"></div><div class="a " style="left:674px;top:368px;width:1px;height:548px;background:#d8d8d8;"></div><div class="a " style="left:754px;top:368px;width:1px;height:548px;background:#d8d8d8;"></div><div class="a " style="left:834px;top:368px;width:1px;height:548px;background:#d8d8d8;"></div><div class="a " style="left:914px;top:368px;width:1px;height:548px;background:#d8d8d8;"></div><div class="a " style="left:994px;top:368px;width:1px;height:548px;background:#d8d8d8;"></div><div class="a " style="left:35px;top:389px;width:1002px;height:1px;background:#d8d8d8;"></div><div class="a " style="left:1px;top:389px;width:33px;height:1px;background:#c6c6c6;"></div><div class="a " style="left:35px;top:411px;width:1002px;height:1px;background:#d8d8d8;"></div><div class="a " style="left:1px;top:411px;width:33px;height:1px;background:#c6c6c6;"></div><div class="a " style="left:35px;top:433px;width:1002px;height:1px;background:#d8d8d8;"></div><div class="a " style="left:1px;top:433px;width:33px;height:1px;background:#c6c6c6;"></div><div class="a " style="left:35px;top:455px;width:1002px;height:1px;background:#d8d8d8;"></div><div class="a " style="left:1px;top:455px;width:33px;height:1px;background:#c6c6c6;"></div><div class="a " style="left:35px;top:477px;width:1002px;height:1px;background:#d8d8d8;"></div><div class="a " style="left:1px;top:477px;width:33px;height:1px;background:#c6c6c6;"></div><div class="a " style="left:35px;top:499px;width:1002px;height:1px;background:#d8d8d8;"></div><div class="a " style="left:1px;top:499px;width:33px;height:1px;background:#c6c6c6;"></div><div class="a " style="left:35px;top:521px;width:1002px;height:1px;background:#d8d8d8;"></div><div class="a " style="left:1px;top:521px;width:33px;height:1px;background:#c6c6c6;"></div><div class="a " style="left:35px;top:543px;width:1002px;height:1px;background:#d8d8d8;"></div><div class="a " style="left:1px;top:543px;width:33px;height:1px;background:#c6c6c6;"></div><div class="a " style="left:35px;top:565px;width:1002px;height:1px;background:#d8d8d8;"></div><div class="a " style="left:1px;top:565px;width:33px;height:1px;background:#c6c6c6;"></div><div class="a " style="left:35px;top:587px;width:1002px;height:1px;background:#d8d8d8;"></div><div class="a " style="left:1px;top:587px;width:33px;height:1px;background:#c6c6c6;"></div><div class="a " style="left:35px;top:609px;width:1002px;height:1px;background:#d8d8d8;"></div><div class="a " style="left:1px;top:609px;width:33px;height:1px;background:#c6c6c6;"></div><div class="a " style="left:35px;top:631px;width:1002px;height:1px;background:#d8d8d8;"></div><div class="a " style="left:1px;top:631px;width:33px;height:1px;background:#c6c6c6;"></div><div class="a " style="left:35px;top:653px;width:1002px;height:1px;background:#d8d8d8;"></div><div class="a " style="left:1px;top:653px;width:33px;height:1px;background:#c6c6c6;"></div><div class="a " style="left:35px;top:675px;width:1002px;height:1px;background:#d8d8d8;"></div><div class="a " style="left:1px;top:675px;width:33px;height:1px;background:#c6c6c6;"></div><div class="a " style="left:35px;top:697px;width:1002px;height:1px;background:#d8d8d8;"></div><div class="a " style="left:1px;top:697px;width:33px;height:1px;background:#c6c6c6;"></div><div class="a " style="left:35px;top:719px;width:1002px;height:1px;background:#d8d8d8;"></div><div class="a " style="left:1px;top:719px;width:33px;height:1px;background:#c6c6c6;"></div><div class="a " style="left:35px;top:741px;width:1002px;height:1px;background:#d8d8d8;"></div><div class="a " style="left:1px;top:741px;width:33px;height:1px;background:#c6c6c6;"></div><div class="a " style="left:35px;top:763px;width:1002px;height:1px;background:#d8d8d8;"></div><div class="a " style="left:1px;top:763px;width:33px;height:1px;background:#c6c6c6;"></div><div class="a " style="left:35px;top:785px;width:1002px;height:1px;background:#d8d8d8;"></div><div class="a " style="left:1px;top:785px;width:33px;height:1px;background:#c6c6c6;"></div><div class="a " style="left:35px;top:807px;width:1002px;height:1px;background:#d8d8d8;"></div><div class="a " style="left:1px;top:807px;width:33px;height:1px;background:#c6c6c6;"></div><div class="a " style="left:35px;top:829px;width:1002px;height:1px;background:#d8d8d8;"></div><div class="a " style="left:1px;top:829px;width:33px;height:1px;background:#c6c6c6;"></div><div class="a " style="left:35px;top:851px;width:1002px;height:1px;background:#d8d8d8;"></div><div class="a " style="left:1px;top:851px;width:33px;height:1px;background:#c6c6c6;"></div><div class="a " style="left:35px;top:873px;width:1002px;height:1px;background:#d8d8d8;"></div><div class="a " style="left:1px;top:873px;width:33px;height:1px;background:#c6c6c6;"></div><div class="a " style="left:35px;top:895px;width:1002px;height:1px;background:#d8d8d8;"></div><div class="a " style="left:1px;top:895px;width:33px;height:1px;background:#c6c6c6;"></div><span class="a t" style="left:13px;top:368.5px;font-size:16px;line-height:22px;height:22px;color:#217346;width:11px;text-align:center;">1</span><span class="a t" style="left:13px;top:390.5px;font-size:16px;line-height:22px;height:22px;color:#111;width:11px;text-align:center;">2</span><span class="a t" style="left:13px;top:412.5px;font-size:16px;line-height:22px;height:22px;color:#111;width:11px;text-align:center;">3</span><span class="a t" style="left:13px;top:434.5px;font-size:16px;line-height:22px;height:22px;color:#111;width:11px;text-align:center;">4</span><span class="a t" style="left:13px;top:456.5px;font-size:16px;line-height:22px;height:22px;color:#111;width:11px;text-align:center;">5</span><span class="a t" style="left:13px;top:478.5px;font-size:16px;line-height:22px;height:22px;color:#111;width:11px;text-align:center;">6</span><span class="a t" style="left:13px;top:500.5px;font-size:16px;line-height:22px;height:22px;color:#111;width:11px;text-align:center;">7</span><span class="a t" style="left:13px;top:522.5px;font-size:16px;line-height:22px;height:22px;color:#111;width:11px;text-align:center;">8</span><span class="a t" style="left:13px;top:544.5px;font-size:16px;line-height:22px;height:22px;color:#111;width:11px;text-align:center;">9</span><span class="a t" style="left:8px;top:566.5px;font-size:16px;line-height:22px;height:22px;color:#111;width:20px;text-align:center;">10</span><span class="a t" style="left:8px;top:588.5px;font-size:16px;line-height:22px;height:22px;color:#111;width:20px;text-align:center;">11</span><span class="a t" style="left:8px;top:610.5px;font-size:16px;line-height:22px;height:22px;color:#111;width:20px;text-align:center;">12</span><span class="a t" style="left:8px;top:632.5px;font-size:16px;line-height:22px;height:22px;color:#111;width:20px;text-align:center;">13</span><span class="a t" style="left:8px;top:654.5px;font-size:16px;line-height:22px;height:22px;color:#111;width:20px;text-align:center;">14</span><span class="a t" style="left:8px;top:676.5px;font-size:16px;line-height:22px;height:22px;color:#111;width:20px;text-align:center;">15</span><span class="a t" style="left:8px;top:698.5px;font-size:16px;line-height:22px;height:22px;color:#111;width:20px;text-align:center;">16</span><span class="a t" style="left:8px;top:720.5px;font-size:16px;line-height:22px;height:22px;color:#111;width:20px;text-align:center;">17</span><span class="a t" style="left:8px;top:742.5px;font-size:16px;line-height:22px;height:22px;color:#111;width:20px;text-align:center;">18</span><span class="a t" style="left:8px;top:764.5px;font-size:16px;line-height:22px;height:22px;color:#111;width:20px;text-align:center;">19</span><span class="a t" style="left:8px;top:786.5px;font-size:16px;line-height:22px;height:22px;color:#111;width:20px;text-align:center;">20</span><span class="a t" style="left:8px;top:808.5px;font-size:16px;line-height:22px;height:22px;color:#111;width:20px;text-align:center;">21</span><span class="a t" style="left:8px;top:830.5px;font-size:16px;line-height:22px;height:22px;color:#111;width:20px;text-align:center;">22</span><span class="a t" style="left:8px;top:852.5px;font-size:16px;line-height:22px;height:22px;color:#111;width:20px;text-align:center;">23</span><span class="a t" style="left:8px;top:874.5px;font-size:16px;line-height:22px;height:22px;color:#111;width:20px;text-align:center;">24</span><span class="a t" style="left:8px;top:896.5px;font-size:16px;line-height:22px;height:22px;color:#111;width:20px;text-align:center;">25</span><span class="a t" style="left:38px;top:367.5px;font-size:16.67px;line-height:23px;height:23px;color:#000;font-family:'Liberation Sans','Noto Sans CJK SC',sans-serif;max-width:76px;overflow:hidden;">Province</span><span class="a t" style="left:118px;top:367.5px;font-size:16.67px;line-height:23px;height:23px;color:#000;font-family:'Liberation Sans','Noto Sans CJK SC',sans-serif;max-width:76px;overflow:hidden;">City</span><span class="a t" style="left:198px;top:367.5px;font-size:16.67px;line-height:23px;height:23px;color:#000;font-family:'Liberation Sans','Noto Sans CJK SC',sans-serif;max-width:76px;overflow:hidden;">时间</span><span class="a t" style="left:278px;top:367.5px;font-size:16.67px;line-height:23px;height:23px;color:#000;font-family:'Liberation Sans','Noto Sans CJK SC',sans-serif;max-width:76px;overflow:hidden;">AQI</span><span class="a t" style="left:358px;top:367.5px;font-size:16.67px;line-height:23px;height:23px;color:#000;font-family:'Liberation Sans','Noto Sans CJK SC',sans-serif;max-width:76px;overflow:hidden;">PM10</span><span class="a t" style="left:438px;top:367.5px;font-size:16.67px;line-height:23px;height:23px;color:#000;font-family:'Liberation Sans','Noto Sans CJK SC',sans-serif;max-width:76px;overflow:hidden;">PM2.5</span><span class="a t" style="left:518px;top:367.5px;font-size:16.67px;line-height:23px;height:23px;color:#000;font-family:'Liberation Sans','Noto Sans CJK SC',sans-serif;max-width:76px;overflow:hidden;">CO</span><span class="a t" style="left:598px;top:367.5px;font-size:16.67px;line-height:23px;height:23px;color:#000;font-family:'Liberation Sans','Noto Sans CJK SC',sans-serif;max-width:76px;overflow:hidden;">NO2</span><span class="a t" style="left:678px;top:367.5px;font-size:16.67px;line-height:23px;height:23px;color:#000;font-family:'Liberation Sans','Noto Sans CJK SC',sans-serif;max-width:76px;overflow:hidden;">SO2</span><span class="a t" style="left:758px;top:367.5px;font-size:16.67px;line-height:23px;height:23px;color:#000;font-family:'Liberation Sans','Noto Sans CJK SC',sans-serif;max-width:76px;overflow:hidden;">O3</span><span class="a t" style="left:38px;top:389.5px;font-size:16.67px;line-height:23px;height:23px;color:#000;font-family:'Liberation Sans','Noto Sans CJK SC',sans-serif;max-width:76px;overflow:hidden;">河北</span><span class="a t" style="left:118px;top:389.5px;font-size:16.67px;line-height:23px;height:23px;color:#000;font-family:'Liberation Sans','Noto Sans CJK SC',sans-serif;max-width:76px;overflow:hidden;">唐山</span><span class="a t" style="left:198px;top:389.5px;font-size:16.67px;line-height:23px;height:23px;color:#000;font-family:'Liberation Sans','Noto Sans CJK SC',sans-serif;max-width:76px;overflow:hidden;">2022-03-1</span><span class="a t" style="left:278px;top:389.5px;font-size:16.67px;line-height:23px;height:23px;color:#000;font-family:'Liberation Sans','Noto Sans CJK SC',sans-serif;max-width:76px;overflow:hidden;">113</span><svg class="a" style="left:275px;top:390px;" width="7" height="7" viewBox="0 0 7 7"><path d="M0 0H7L0 7z" fill="#1e8a1e"/></svg><span class="a t" style="left:358px;top:389.5px;font-size:16.67px;line-height:23px;height:23px;color:#000;font-family:'Liberation Sans','Noto Sans CJK SC',sans-serif;max-width:76px;overflow:hidden;">175μg/m</span><span class="a t" style="left:438px;top:389.5px;font-size:16.67px;line-height:23px;height:23px;color:#000;font-family:'Liberation Sans','Noto Sans CJK SC',sans-serif;max-width:76px;overflow:hidden;">69</span><svg class="a" style="left:435px;top:390px;" width="7" height="7" viewBox="0 0 7 7"><path d="M0 0H7L0 7z" fill="#1e8a1e"/></svg><span class="a t" style="left:518px;top:389.5px;font-size:16.67px;line-height:23px;height:23px;color:#000;font-family:'Liberation Sans','Noto Sans CJK SC',sans-serif;max-width:76px;overflow:hidden;">1.1</span><svg class="a" style="left:515px;top:390px;" width="7" height="7" viewBox="0 0 7 7"><path d="M0 0H7L0 7z" fill="#1e8a1e"/></svg><span class="a t" style="left:598px;top:389.5px;font-size:16.67px;line-height:23px;height:23px;color:#000;font-family:'Liberation Sans','Noto Sans CJK SC',sans-serif;max-width:76px;overflow:hidden;">56μg/m</span><span class="a t" style="left:678px;top:389.5px;font-size:16.67px;line-height:23px;height:23px;color:#000;font-family:'Liberation Sans','Noto Sans CJK SC',sans-serif;max-width:76px;overflow:hidden;">7μg/m</span><span class="a t" style="left:758px;top:389.5px;font-size:16.67px;line-height:23px;height:23px;color:#000;font-family:'Liberation Sans','Noto Sans CJK SC',sans-serif;max-width:76px;overflow:hidden;">57</span><svg class="a" style="left:755px;top:390px;" width="7" height="7" viewBox="0 0 7 7"><path d="M0 0H7L0 7z" fill="#1e8a1e"/></svg><span class="a t" style="left:38px;top:411.5px;font-size:16.67px;line-height:23px;height:23px;color:#000;font-family:'Liberation Sans','Noto Sans CJK SC',sans-serif;max-width:76px;overflow:hidden;">河北</span><span class="a t" style="left:118px;top:411.5px;font-size:16.67px;line-height:23px;height:23px;color:#000;font-family:'Liberation Sans','Noto Sans CJK SC',sans-serif;max-width:76px;overflow:hidden;">保定</span><span class="a t" style="left:198px;top:411.5px;font-size:16.67px;line-height:23px;height:23px;color:#000;font-family:'Liberation Sans','Noto Sans CJK SC',sans-serif;max-width:76px;overflow:hidden;">2022-03-1</span><span class="a t" style="left:278px;top:411.5px;font-size:16.67px;line-height:23px;height:23px;color:#000;font-family:'Liberation Sans','Noto Sans CJK SC',sans-serif;max-width:76px;overflow:hidden;">104</span><svg class="a" style="left:275px;top:412px;" width="7" height="7" viewBox="0 0 7 7"><path d="M0 0H7L0 7z" fill="#1e8a1e"/></svg><span class="a t" style="left:358px;top:411.5px;font-size:16.67px;line-height:23px;height:23px;color:#000;font-family:'Liberation Sans','Noto Sans CJK SC',sans-serif;max-width:76px;overflow:hidden;">157μg/m</span><span class="a t" style="left:438px;top:411.5px;font-size:16.67px;line-height:23px;height:23px;color:#000;font-family:'Liberation Sans','Noto Sans CJK SC',sans-serif;max-width:76px;overflow:hidden;">73</span><svg class="a" style="left:435px;top:412px;" width="7" height="7" viewBox="0 0 7 7"><path d="M0 0H7L0 7z" fill="#1e8a1e"/></svg><span class="a t" style="left:518px;top:411.5px;font-size:16.67px;line-height:23px;height:23px;color:#000;font-family:'Liberation Sans','Noto Sans CJK SC',sans-serif;max-width:76px;overflow:hidden;">0.7</span><svg class="a" style="left:515px;top:412px;" width="7" height="7" viewBox="0 0 7 7"><path d="M0 0H7L0 7z" fill="#1e8a1e"/></svg><span class="a t" style="left:598px;top:411.5px;font-size:16.67px;line-height:23px;height:23px;color:#000;font-family:'Liberation Sans','Noto Sans CJK SC',sans-serif;max-width:76px;overflow:hidden;">43μg/m</span><span class="a t" style="left:678px;top:411.5px;font-size:16.67px;line-height:23px;height:23px;color:#000;font-family:'Liberation Sans','Noto Sans CJK SC',sans-serif;max-width:76px;overflow:hidden;">9μg/m</span><span class="a t" style="left:758px;top:411.5px;font-size:16.67px;line-height:23px;height:23px;color:#000;font-family:'Liberation Sans','Noto Sans CJK SC',sans-serif;max-width:76px;overflow:hidden;">79</span><svg class="a" style="left:755px;top:412px;" width="7" height="7" viewBox="0 0 7 7"><path d="M0 0H7L0 7z" fill="#1e8a1e"/></svg><span class="a t" style="left:38px;top:433.5px;font-size:16.67px;line-height:23px;height:23px;color:#000;font-family:'Liberation Sans','Noto Sans CJK SC',sans-serif;max-width:76px;overflow:hidden;">河北</span><span class="a t" style="left:118px;top:433.5px;font-size:16.67px;line-height:23px;height:23px;color:#000;font-family:'Liberation Sans','Noto Sans CJK SC',sans-serif;max-width:76px;overflow:hidden;">邯郸</span><span class="a t" style="left:198px;top:433.5px;font-size:16.67px;line-height:23px;height:23px;color:#000;font-family:'Liberation Sans','Noto Sans CJK SC',sans-serif;max-width:76px;overflow:hidden;">2022-03-1</span><span class="a t" style="left:278px;top:433.5px;font-size:16.67px;line-height:23px;height:23px;color:#000;font-family:'Liberation Sans','Noto Sans CJK SC',sans-serif;max-width:76px;overflow:hidden;">312</span><svg class="a" style="left:275px;top:434px;" width="7" height="7" viewBox="0 0 7 7"><path d="M0 0H7L0 7z" fill="#1e8a1e"/></svg><span class="a t" style="left:358px;top:433.5px;font-size:16.67px;line-height:23px;height:23px;color:#000;font-family:'Liberation Sans','Noto Sans CJK SC',sans-serif;max-width:76px;overflow:hidden;">429μg/m</span><span class="a t" style="left:438px;top:433.5px;font-size:16.67px;line-height:23px;height:23px;color:#000;font-family:'Liberation Sans','Noto Sans CJK SC',sans-serif;max-width:76px;overflow:hidden;">100</span><svg class="a" style="left:435px;top:434px;" width="7" height="7" viewBox="0 0 7 7"><path d="M0 0H7L0 7z" fill="#1e8a1e"/></svg><span class="a t" style="left:518px;top:433.5px;font-size:16.67px;line-height:23px;height:23px;color:#000;font-family:'Liberation Sans','Noto Sans CJK SC',sans-serif;max-width:76px;overflow:hidden;">0.9</span><svg class="a" style="left:515px;top:434px;" width="7" height="7" viewBox="0 0 7 7"><path d="M0 0H7L0 7z" fill="#1e8a1e"/></svg><span class="a t" style="left:598px;top:433.5px;font-size:16.67px;line-height:23px;height:23px;color:#000;font-family:'Liberation Sans','Noto Sans CJK SC',sans-serif;max-width:76px;overflow:hidden;">23μg/m</span><span class="a t" style="left:678px;top:433.5px;font-size:16.67px;line-height:23px;height:23px;color:#000;font-family:'Liberation Sans','Noto Sans CJK SC',sans-serif;max-width:76px;overflow:hidden;">10μg/m</span><span class="a t" style="left:758px;top:433.5px;font-size:16.67px;line-height:23px;height:23px;color:#000;font-family:'Liberation Sans','Noto Sans CJK SC',sans-serif;max-width:76px;overflow:hidden;">81</span><svg class="a" style="left:755px;top:434px;" width="7" height="7" viewBox="0 0 7 7"><path d="M0 0H7L0 7z" fill="#1e8a1e"/></svg><span class="a t" style="left:38px;top:455.5px;font-size:16.67px;line-height:23px;height:23px;color:#000;font-family:'Liberation Sans','Noto Sans CJK SC',sans-serif;max-width:76px;overflow:hidden;">河北</span><span class="a t" style="left:118px;top:455.5px;font-size:16.67px;line-height:23px;height:23px;color:#000;font-family:'Liberation Sans','Noto Sans CJK SC',sans-serif;max-width:76px;overflow:hidden;">张家口</span><span class="a t" style="left:198px;top:455.5px;font-size:16.67px;line-height:23px;height:23px;color:#000;font-family:'Liberation Sans','Noto Sans CJK SC',sans-serif;max-width:76px;overflow:hidden;">2022-03-1</span><span class="a t" style="left:278px;top:455.5px;font-size:16.67px;line-height:23px;height:23px;color:#000;font-family:'Liberation Sans','Noto Sans CJK SC',sans-serif;max-width:76px;overflow:hidden;">76</span><svg class="a" style="left:275px;top:456px;" width="7" height="7" viewBox="0 0 7 7"><path d="M0 0H7L0 7z" fill="#1e8a1e"/></svg><span class="a t" style="left:358px;top:455.5px;font-size:16.67px;line-height:23px;height:23px;color:#000;font-family:'Liberation Sans','Noto Sans CJK SC',sans-serif;max-width:76px;overflow:hidden;">102μg/m</span><span class="a t" style="left:438px;top:455.5px;font-size:16.67px;line-height:23px;height:23px;color:#000;font-family:'Liberation Sans','Noto Sans CJK SC',sans-serif;max-width:76px;overflow:hidden;">14</span><svg class="a" style="left:435px;top:456px;" width="7" height="7" viewBox="0 0 7 7"><path d="M0 0H7L0 7z" fill="#1e8a1e"/></svg><span class="a t" style="left:518px;top:455.5px;font-size:16.67px;line-height:23px;height:23px;color:#000;font-family:'Liberation Sans','Noto Sans CJK SC',sans-serif;max-width:76px;overflow:hidden;">0.4</span><svg class="a" style="left:515px;top:456px;" width="7" height="7" viewBox="0 0 7 7"><path d="M0 0H7L0 7z" fill="#1e8a1e"/></svg><span class="a t" style="left:598px;top:455.5px;font-size:16.67px;line-height:23px;height:23px;color:#000;font-family:'Liberation Sans','Noto Sans CJK SC',sans-serif;max-width:76px;overflow:hidden;">11μg/m</span><span class="a t" style="left:678px;top:455.5px;font-size:16.67px;line-height:23px;height:23px;color:#000;font-family:'Liberation Sans','Noto Sans CJK SC',sans-serif;max-width:76px;overflow:hidden;">4μg/m</span><span class="a t" style="left:758px;top:455.5px;font-size:16.67px;line-height:23px;height:23px;color:#000;font-family:'Liberation Sans','Noto Sans CJK SC',sans-serif;max-width:76px;overflow:hidden;">93</span><svg class="a" style="left:755px;top:456px;" width="7" height="7" viewBox="0 0 7 7"><path d="M0 0H7L0 7z" fill="#1e8a1e"/></svg><span class="a t" style="left:38px;top:477.5px;font-size:16.67px;line-height:23px;height:23px;color:#000;font-family:'Liberation Sans','Noto Sans CJK SC',sans-serif;max-width:76px;overflow:hidden;">河北</span><span class="a t" style="left:118px;top:477.5px;font-size:16.67px;line-height:23px;height:23px;color:#000;font-family:'Liberation Sans','Noto Sans CJK SC',sans-serif;max-width:76px;overflow:hidden;">承德</span><span class="a t" style="left:198px;top:477.5px;font-size:16.67px;line-height:23px;height:23px;color:#000;font-family:'Liberation Sans','Noto Sans CJK SC',sans-serif;max-width:76px;overflow:hidden;">2022-03-1</span><span class="a t" style="left:278px;top:477.5px;font-size:16.67px;line-height:23px;height:23px;color:#000;font-family:'Liberation Sans','Noto Sans CJK SC',sans-serif;max-width:76px;overflow:hidden;">28</span><svg class="a" style="left:275px;top:478px;" width="7" height="7" viewBox="0 0 7 7"><path d="M0 0H7L0 7z" fill="#1e8a1e"/></svg><span class="a t" style="left:358px;top:477.5px;font-size:16.67px;line-height:23px;height:23px;color:#000;font-family:'Liberation Sans','Noto Sans CJK SC',sans-serif;max-width:76px;overflow:hidden;">28μg/m</span><span class="a t" style="left:438px;top:477.5px;font-size:16.67px;line-height:23px;height:23px;color:#000;font-family:'Liberation Sans','Noto Sans CJK SC',sans-serif;max-width:76px;overflow:hidden;">10</span><svg class="a" style="left:435px;top:478px;" width="7" height="7" viewBox="0 0 7 7"><path d="M0 0H7L0 7z" fill="#1e8a1e"/></svg><span class="a t" style="left:518px;top:477.5px;font-size:16.67px;line-height:23px;height:23px;color:#000;font-family:'Liberation Sans','Noto Sans CJK SC',sans-serif;max-width:76px;overflow:hidden;">0.3</span><svg class="a" style="left:515px;top:478px;" width="7" height="7" viewBox="0 0 7 7"><path d="M0 0H7L0 7z" fill="#1e8a1e"/></svg><span class="a t" style="left:598px;top:477.5px;font-size:16.67px;line-height:23px;height:23px;color:#000;font-family:'Liberation Sans','Noto Sans CJK SC',sans-serif;max-width:76px;overflow:hidden;">12μg/m</span><span class="a t" style="left:678px;top:477.5px;font-size:16.67px;line-height:23px;height:23px;color:#000;font-family:'Liberation Sans','Noto Sans CJK SC',sans-serif;max-width:76px;overflow:hidden;">4μg/m</span><span class="a t" style="left:758px;top:477.5px;font-size:16.67px;line-height:23px;height:23px;color:#000;font-family:'Liberation Sans','Noto Sans CJK SC',sans-serif;max-width:76px;overflow:hidden;">84</span><svg class="a" style="left:755px;top:478px;" width="7" height="7" viewBox="0 0 7 7"><path d="M0 0H7L0 7z" fill="#1e8a1e"/></svg><span class="a t" style="left:38px;top:499.5px;font-size:16.67px;line-height:23px;height:23px;color:#000;font-family:'Liberation Sans','Noto Sans CJK SC',sans-serif;max-width:76px;overflow:hidden;">河北</span><span class="a t" style="left:118px;top:499.5px;font-size:16.67px;line-height:23px;height:23px;color:#000;font-family:'Liberation Sans','Noto Sans CJK SC',sans-serif;max-width:76px;overflow:hidden;">邢台</span><span class="a t" style="left:198px;top:499.5px;font-size:16.67px;line-height:23px;height:23px;color:#000;font-family:'Liberation Sans','Noto Sans CJK SC',sans-serif;max-width:76px;overflow:hidden;">2022-03-1</span><span class="a t" style="left:278px;top:499.5px;font-size:16.67px;line-height:23px;height:23px;color:#000;font-family:'Liberation Sans','Noto Sans CJK SC',sans-serif;max-width:76px;overflow:hidden;">368</span><svg class="a" style="left:275px;top:500px;" width="7" height="7" viewBox="0 0 7 7"><path d="M0 0H7L0 7z" fill="#1e8a1e"/></svg><span class="a t" style="left:358px;top:499.5px;font-size:16.67px;line-height:23px;height:23px;color:#000;font-family:'Liberation Sans','Noto Sans CJK SC',sans-serif;max-width:76px;overflow:hidden;">474μg/m</span><span class="a t" style="left:438px;top:499.5px;font-size:16.67px;line-height:23px;height:23px;color:#000;font-family:'Liberation Sans','Noto Sans CJK SC',sans-serif;max-width:76px;overflow:hidden;">111</span><svg class="a" style="left:435px;top:500px;" width="7" height="7" viewBox="0 0 7 7"><path d="M0 0H7L0 7z" fill="#1e8a1e"/></svg><span class="a t" style="left:518px;top:499.5px;font-size:16.67px;line-height:23px;height:23px;color:#000;font-family:'Liberation Sans','Noto Sans CJK SC',sans-serif;max-width:76px;overflow:hidden;">1.3</span><svg class="a" style="left:515px;top:500px;" width="7" height="7" viewBox="0 0 7 7"><path d="M0 0H7L0 7z" fill="#1e8a1e"/></svg><span class="a t" style="left:598px;top:499.5px;font-size:16.67px;line-height:23px;height:23px;color:#000;font-family:'Liberation Sans','Noto Sans CJK SC',sans-serif;max-width:76px;overflow:hidden;">42μg/m</span><span class="a t" style="left:678px;top:499.5px;font-size:16.67px;line-height:23px;height:23px;color:#000;font-family:'Liberation Sans','Noto Sans CJK SC',sans-serif;max-width:76px;overflow:hidden;">12μg/m</span><span class="a t" style="left:758px;top:499.5px;font-size:16.67px;line-height:23px;height:23px;color:#000;font-family:'Liberation Sans','Noto Sans CJK SC',sans-serif;max-width:76px;overflow:hidden;">78</span><svg class="a" style="left:755px;top:500px;" width="7" height="7" viewBox="0 0 7 7"><path d="M0 0H7L0 7z" fill="#1e8a1e"/></svg><span class="a t" style="left:38px;top:521.5px;font-size:16.67px;line-height:23px;height:23px;color:#000;font-family:'Liberation Sans','Noto Sans CJK SC',sans-serif;max-width:76px;overflow:hidden;">河北</span><span class="a t" style="left:118px;top:521.5px;font-size:16.67px;line-height:23px;height:23px;color:#000;font-family:'Liberation Sans','Noto Sans CJK SC',sans-serif;max-width:76px;overflow:hidden;">衡水</span><span class="a t" style="left:198px;top:521.5px;font-size:16.67px;line-height:23px;height:23px;color:#000;font-family:'Liberation Sans','Noto Sans CJK SC',sans-serif;max-width:76px;overflow:hidden;">2022-03-1</span><span class="a t" style="left:278px;top:521.5px;font-size:16.67px;line-height:23px;height:23px;color:#000;font-family:'Liberation Sans','Noto Sans CJK SC',sans-serif;max-width:76px;overflow:hidden;">239</span><svg class="a" style="left:275px;top:522px;" width="7" height="7" viewBox="0 0 7 7"><path d="M0 0H7L0 7z" fill="#1e8a1e"/></svg><span class="a t" style="left:358px;top:521.5px;font-size:16.67px;line-height:23px;height:23px;color:#000;font-family:'Liberation Sans','Noto Sans CJK SC',sans-serif;max-width:76px;overflow:hidden;">377μg/m</span><span class="a t" style="left:438px;top:521.5px;font-size:16.67px;line-height:23px;height:23px;color:#000;font-family:'Liberation Sans','Noto Sans CJK SC',sans-serif;max-width:76px;overflow:hidden;">95</span><svg class="a" style="left:435px;top:522px;" width="7" height="7" viewBox="0 0 7 7"><path d="M0 0H7L0 7z" fill="#1e8a1e"/></svg><span class="a t" style="left:518px;top:521.5px;font-size:16.67px;line-height:23px;height:23px;color:#000;font-family:'Liberation Sans','Noto Sans CJK SC',sans-serif;max-width:76px;overflow:hidden;">0.6</span><svg class="a" style="left:515px;top:522px;" width="7" height="7" viewBox="0 0 7 7"><path d="M0 0H7L0 7z" fill="#1e8a1e"/></svg><span class="a t" style="left:598px;top:521.5px;font-size:16.67px;line-height:23px;height:23px;color:#000;font-family:'Liberation Sans','Noto Sans CJK SC',sans-serif;max-width:76px;overflow:hidden;">23μg/m</span><span class="a t" style="left:678px;top:521.5px;font-size:16.67px;line-height:23px;height:23px;color:#000;font-family:'Liberation Sans','Noto Sans CJK SC',sans-serif;max-width:76px;overflow:hidden;">10μg/m</span><span class="a t" style="left:758px;top:521.5px;font-size:16.67px;line-height:23px;height:23px;color:#000;font-family:'Liberation Sans','Noto Sans CJK SC',sans-serif;max-width:76px;overflow:hidden;">107</span><svg class="a" style="left:755px;top:522px;" width="7" height="7" viewBox="0 0 7 7"><path d="M0 0H7L0 7z" fill="#1e8a1e"/></svg><span class="a t" style="left:38px;top:543.5px;font-size:16.67px;line-height:23px;height:23px;color:#000;font-family:'Liberation Sans','Noto Sans CJK SC',sans-serif;max-width:76px;overflow:hidden;">河北</span><span class="a t" style="left:118px;top:543.5px;font-size:16.67px;line-height:23px;height:23px;color:#000;font-family:'Liberation Sans','Noto Sans CJK SC',sans-serif;max-width:76px;overflow:hidden;">廊坊</span><span class="a t" style="left:198px;top:543.5px;font-size:16.67px;line-height:23px;height:23px;color:#000;font-family:'Liberation Sans','Noto Sans CJK SC',sans-serif;max-width:76px;overflow:hidden;">2022-03-1</span><span class="a t" style="left:278px;top:543.5px;font-size:16.67px;line-height:23px;height:23px;color:#000;font-family:'Liberation Sans','Noto Sans CJK SC',sans-serif;max-width:76px;overflow:hidden;">90</span><svg class="a" style="left:275px;top:544px;" width="7" height="7" viewBox="0 0 7 7"><path d="M0 0H7L0 7z" fill="#1e8a1e"/></svg><span class="a t" style="left:358px;top:543.5px;font-size:16.67px;line-height:23px;height:23px;color:#000;font-family:'Liberation Sans','Noto Sans CJK SC',sans-serif;max-width:76px;overflow:hidden;">129μg/m</span><span class="a t" style="left:438px;top:543.5px;font-size:16.67px;line-height:23px;height:23px;color:#000;font-family:'Liberation Sans','Noto Sans CJK SC',sans-serif;max-width:76px;overflow:hidden;">65</span><svg class="a" style="left:435px;top:544px;" width="7" height="7" viewBox="0 0 7 7"><path d="M0 0H7L0 7z" fill="#1e8a1e"/></svg><span class="a t" style="left:518px;top:543.5px;font-size:16.67px;line-height:23px;height:23px;color:#000;font-family:'Liberation Sans','Noto Sans CJK SC',sans-serif;max-width:76px;overflow:hidden;">0.8</span><svg class="a" style="left:515px;top:544px;" width="7" height="7" viewBox="0 0 7 7"><path d="M0 0H7L0 7z" fill="#1e8a1e"/></svg><span class="a t" style="left:598px;top:543.5px;font-size:16.67px;line-height:23px;height:23px;color:#000;font-family:'Liberation Sans','Noto Sans CJK SC',sans-serif;max-width:76px;overflow:hidden;">27μg/m</span><span class="a t" style="left:678px;top:543.5px;font-size:16.67px;line-height:23px;height:23px;color:#000;font-family:'Liberation Sans','Noto Sans CJK SC',sans-serif;max-width:76px;overflow:hidden;">6μg/m</span><span class="a t" style="left:758px;top:543.5px;font-size:16.67px;line-height:23px;height:23px;color:#000;font-family:'Liberation Sans','Noto Sans CJK SC',sans-serif;max-width:76px;overflow:hidden;">94</span><svg class="a" style="left:755px;top:544px;" width="7" height="7" viewBox="0 0 7 7"><path d="M0 0H7L0 7z" fill="#1e8a1e"/></svg><span class="a t" style="left:38px;top:565.5px;font-size:16.67px;line-height:23px;height:23px;color:#000;font-family:'Liberation Sans','Noto Sans CJK SC',sans-serif;max-width:76px;overflow:hidden;">河北</span><span class="a t" style="left:118px;top:565.5px;font-size:16.67px;line-height:23px;height:23px;color:#000;font-family:'Liberation Sans','Noto Sans CJK SC',sans-serif;max-width:76px;overflow:hidden;">秦皇岛</span><span class="a t" style="left:198px;top:565.5px;font-size:16.67px;line-height:23px;height:23px;color:#000;font-family:'Liberation Sans','Noto Sans CJK SC',sans-serif;max-width:76px;overflow:hidden;">2022-03-1</span><span class="a t" style="left:278px;top:565.5px;font-size:16.67px;line-height:23px;height:23px;color:#000;font-family:'Liberation Sans','Noto Sans CJK SC',sans-serif;max-width:76px;overflow:hidden;">99</span><svg class="a" style="left:275px;top:566px;" width="7" height="7" viewBox="0 0 7 7"><path d="M0 0H7L0 7z" fill="#1e8a1e"/></svg><span class="a t" style="left:358px;top:565.5px;font-size:16.67px;line-height:23px;height:23px;color:#000;font-family:'Liberation Sans','Noto Sans CJK SC',sans-serif;max-width:76px;overflow:hidden;">138μg/m</span><span class="a t" style="left:438px;top:565.5px;font-size:16.67px;line-height:23px;height:23px;color:#000;font-family:'Liberation Sans','Noto Sans CJK SC',sans-serif;max-width:76px;overflow:hidden;">74</span><svg class="a" style="left:435px;top:566px;" width="7" height="7" viewBox="0 0 7 7"><path d="M0 0H7L0 7z" fill="#1e8a1e"/></svg><span class="a t" style="left:518px;top:565.5px;font-size:16.67px;line-height:23px;height:23px;color:#000;font-family:'Liberation Sans','Noto Sans CJK SC',sans-serif;max-width:76px;overflow:hidden;">0.9</span><svg class="a" style="left:515px;top:566px;" width="7" height="7" viewBox="0 0 7 7"><path d="M0 0H7L0 7z" fill="#1e8a1e"/></svg><span class="a t" style="left:598px;top:565.5px;font-size:16.67px;line-height:23px;height:23px;color:#000;font-family:'Liberation Sans','Noto Sans CJK SC',sans-serif;max-width:76px;overflow:hidden;">45μg/m</span><span class="a t" style="left:678px;top:565.5px;font-size:16.67px;line-height:23px;height:23px;color:#000;font-family:'Liberation Sans','Noto Sans CJK SC',sans-serif;max-width:76px;overflow:hidden;">7μg/m</span><span class="a t" style="left:758px;top:565.5px;font-size:16.67px;line-height:23px;height:23px;color:#000;font-family:'Liberation Sans','Noto Sans CJK SC',sans-serif;max-width:76px;overflow:hidden;">75</span><svg class="a" style="left:755px;top:566px;" width="7" height="7" viewBox="0 0 7 7"><path d="M0 0H7L0 7z" fill="#1e8a1e"/></svg><span class="a t" style="left:38px;top:587.5px;font-size:16.67px;line-height:23px;height:23px;color:#000;font-family:'Liberation Sans','Noto Sans CJK SC',sans-serif;max-width:76px;overflow:hidden;">河北</span><span class="a t" style="left:118px;top:587.5px;font-size:16.67px;line-height:23px;height:23px;color:#000;font-family:'Liberation Sans','Noto Sans CJK SC',sans-serif;max-width:76px;overflow:hidden;">沧州</span><span class="a t" style="left:198px;top:587.5px;font-size:16.67px;line-height:23px;height:23px;color:#000;font-family:'Liberation Sans','Noto Sans CJK SC',sans-serif;max-width:76px;overflow:hidden;">2022-03-1</span><span class="a t" style="left:278px;top:587.5px;font-size:16.67px;line-height:23px;height:23px;color:#000;font-family:'Liberation Sans','Noto Sans CJK SC',sans-serif;max-width:76px;overflow:hidden;">175</span><svg class="a" style="left:275px;top:588px;" width="7" height="7" viewBox="0 0 7 7"><path d="M0 0H7L0 7z" fill="#1e8a1e"/></svg><span class="a t" style="left:358px;top:587.5px;font-size:16.67px;line-height:23px;height:23px;color:#000;font-family:'Liberation Sans','Noto Sans CJK SC',sans-serif;max-width:76px;overflow:hidden;">300μg/m</span><span class="a t" style="left:438px;top:587.5px;font-size:16.67px;line-height:23px;height:23px;color:#000;font-family:'Liberation Sans','Noto Sans CJK SC',sans-serif;max-width:76px;overflow:hidden;">98</span><svg class="a" style="left:435px;top:588px;" width="7" height="7" viewBox="0 0 7 7"><path d="M0 0H7L0 7z" fill="#1e8a1e"/></svg><span class="a t" style="left:518px;top:587.5px;font-size:16.67px;line-height:23px;height:23px;color:#000;font-family:'Liberation Sans','Noto Sans CJK SC',sans-serif;max-width:76px;overflow:hidden;">0.8</span><svg class="a" style="left:515px;top:588px;" width="7" height="7" viewBox="0 0 7 7"><path d="M0 0H7L0 7z" fill="#1e8a1e"/></svg><span class="a t" style="left:598px;top:587.5px;font-size:16.67px;line-height:23px;height:23px;color:#000;font-family:'Liberation Sans','Noto Sans CJK SC',sans-serif;max-width:76px;overflow:hidden;">25μg/m</span><span class="a t" style="left:678px;top:587.5px;font-size:16.67px;line-height:23px;height:23px;color:#000;font-family:'Liberation Sans','Noto Sans CJK SC',sans-serif;max-width:76px;overflow:hidden;">11μg/m</span><span class="a t" style="left:758px;top:587.5px;font-size:16.67px;line-height:23px;height:23px;color:#000;font-family:'Liberation Sans','Noto Sans CJK SC',sans-serif;max-width:76px;overflow:hidden;">116</span><svg class="a" style="left:755px;top:588px;" width="7" height="7" viewBox="0 0 7 7"><path d="M0 0H7L0 7z" fill="#1e8a1e"/></svg><span class="a t" style="left:38px;top:609.5px;font-size:16.67px;line-height:23px;height:23px;color:#000;font-family:'Liberation Sans','Noto Sans CJK SC',sans-serif;max-width:76px;overflow:hidden;">河北</span><span class="a t" style="left:118px;top:609.5px;font-size:16.67px;line-height:23px;height:23px;color:#000;font-family:'Liberation Sans','Noto Sans CJK SC',sans-serif;max-width:76px;overflow:hidden;">石家庄</span><span class="a t" style="left:198px;top:609.5px;font-size:16.67px;line-height:23px;height:23px;color:#000;font-family:'Liberation Sans','Noto Sans CJK SC',sans-serif;max-width:76px;overflow:hidden;">2022-03-1</span><span class="a t" style="left:278px;top:609.5px;font-size:16.67px;line-height:23px;height:23px;color:#000;font-family:'Liberation Sans','Noto Sans CJK SC',sans-serif;max-width:76px;overflow:hidden;">181</span><svg class="a" style="left:275px;top:610px;" width="7" height="7" viewBox="0 0 7 7"><path d="M0 0H7L0 7z" fill="#1e8a1e"/></svg><span class="a t" style="left:358px;top:609.5px;font-size:16.67px;line-height:23px;height:23px;color:#000;font-family:'Liberation Sans','Noto Sans CJK SC',sans-serif;max-width:76px;overflow:hidden;">311μg/m</span><span class="a t" style="left:438px;top:609.5px;font-size:16.67px;line-height:23px;height:23px;color:#000;font-family:'Liberation Sans','Noto Sans CJK SC',sans-serif;max-width:76px;overflow:hidden;">104</span><svg class="a" style="left:435px;top:610px;" width="7" height="7" viewBox="0 0 7 7"><path d="M0 0H7L0 7z" fill="#1e8a1e"/></svg><span class="a t" style="left:518px;top:609.5px;font-size:16.67px;line-height:23px;height:23px;color:#000;font-family:'Liberation Sans','Noto Sans CJK SC',sans-serif;max-width:76px;overflow:hidden;">0.9</span><svg class="a" style="left:515px;top:610px;" width="7" height="7" viewBox="0 0 7 7"><path d="M0 0H7L0 7z" fill="#1e8a1e"/></svg><span class="a t" style="left:598px;top:609.5px;font-size:16.67px;line-height:23px;height:23px;color:#000;font-family:'Liberation Sans','Noto Sans CJK SC',sans-serif;max-width:76px;overflow:hidden;">42μg/m</span><span class="a t" style="left:678px;top:609.5px;font-size:16.67px;line-height:23px;height:23px;color:#000;font-family:'Liberation Sans','Noto Sans CJK SC',sans-serif;max-width:76px;overflow:hidden;">10μg/m</span><span class="a t" style="left:758px;top:609.5px;font-size:16.67px;line-height:23px;height:23px;color:#000;font-family:'Liberation Sans','Noto Sans CJK SC',sans-serif;max-width:76px;overflow:hidden;">95</span><svg class="a" style="left:755px;top:610px;" width="7" height="7" viewBox="0 0 7 7"><path d="M0 0H7L0 7z" fill="#1e8a1e"/></svg><div class="a " style="left:34px;top:367px;width:82px;height:24px;border:2px solid #217346;"></div><div class="a " style="left:111px;top:386px;width:7px;height:7px;background:#217346;border:1px solid #fff;"></div><div class="a " style="left:1037px;top:346px;width:26px;height:570px;background:#e6e6e6;"></div><div class="a " style="left:1037px;top:368px;width:1px;height:548px;background:#a8a8a8;"></div><div class="a " style="left:1041px;top:348px;width:19px;height:568px;background:#f0f0f0;"></div><div class="a " style="left:1041px;top:348px;width:19px;height:19px;background:#fff;border:1px solid #8e8e8e;"></div><svg class="a" style="left:1046px;top:354.5px;" width="9" height="5" viewBox="0 0 9 5"><path d="M0 5L4.500 0L9 5z" fill="#777"/></svg><div class="a " style="left:1041px;top:368px;width:19px;height:506px;background:#fff;border:1px solid #8e8e8e;"></div><div class="a " style="left:1041px;top:874px;width:19px;height:24px;background:#c8c8c8;"></div><div class="a " style="left:1041px;top:898px;width:19px;height:18px;background:#fff;border:1px solid #8e8e8e;"></div><svg class="a" style="left:1046px;top:906px;" width="9" height="5" viewBox="0 0 9 5"><path d="M0 0L4.500 5L9 0z" fill="#777"/></svg><div class="a " style="left:1px;top:916px;width:1062px;height:29px;background:#e6e6e6;"></div><div class="a " style="left:1px;top:941px;width:1062px;height:4px;background:#eaeaea;"></div><div class="a " style="left:1px;top:916px;width:1036px;height:1px;background:#9d9d9d;"></div><svg class="a" style="left:28px;top:925px;" width="6" height="10" viewBox="0 0 6 10"><path d="M6 0L0 5L6 10z" fill="#c0c0c0"/></svg><svg class="a" style="left:57px;top:925px;" width="6" height="10" viewBox="0 0 6 10"><path d="M0 0L6 5L0 10z" fill="#c0c0c0"/></svg><div class="a " style="left:104px;top:916px;width:229px;height:26px;background:#fff;border-left:1px solid #bdbdbd;border-right:1px solid #bdbdbd;border-bottom:2px solid #217346;"></div><span class="a t" style="left:117.5px;top:914.5px;font-size:18px;line-height:25px;height:25px;color:#217346;letter-spacing:-0.13px;">2022-03-15-20.48.44河北</span><svg class="a" style="left:365.5px;top:920.5px;" width="21" height="21" viewBox="0 0 21 21"><circle cx="10.500" cy="10.500" r="9.300" fill="none" stroke="#7a7a7a" stroke-width="1.300"/><path d="M10.500 5.500v10M5.500 10.500h10" stroke="#7a7a7a" stroke-width="1.500"/></svg><div class="a " style="left:636px;top:924px;width:3px;height:3px;background:#a6a6a6;"></div><div class="a " style="left:636px;top:929px;width:3px;height:3px;background:#a6a6a6;"></div><div class="a " style="left:636px;top:934px;width:3px;height:3px;background:#a6a6a6;"></div><div class="a " style="left:654px;top:921px;width:383px;height:19px;background:#f0f0f0;"></div><div class="a " style="left:654px;top:921px;width:20px;height:19px;background:#fff;border:1px solid #8e8e8e;"></div><svg class="a" style="left:661px;top:926px;" width="5" height="9" viewBox="0 0 5 9"><path d="M5 0L0 4.500L5 9z" fill="#444"/></svg><div class="a " style="left:673px;top:921px;width:317px;height:19px;background:#fff;border:1px solid #8e8e8e;"></div><div class="a " style="left:990px;top:921px;width:29px;height:19px;background:#cdcdcd;"></div><div class="a " style="left:1019px;top:921px;width:19px;height:19px;background:#fff;border:1px solid #8e8e8e;"></div><svg class="a" style="left:1026.5px;top:926px;" width="5" height="9" viewBox="0 0 5 9"><path d="M0 0L5 4.500L0 9z" fill="#444"/></svg><div class="a " style="left:1px;top:945px;width:1062px;height:27px;background:#f1f1f1;"></div><div class="a " style="left:1px;top:945px;width:1062px;height:1px;background:#c8c8c8;"></div><span class="a t" style="left:10px;top:948.0px;font-size:15px;line-height:21px;height:21px;color:#262626;letter-spacing:-0.52px;transform:scaleY(0.930);">就绪</span><svg class="a" style="left:65px;top:951.5px;" width="20" height="18" viewBox="0 0 20 18"><path d="M7.500 0.800A7.500 7.500 0 1 0 13.500 13.500" fill="none" stroke="#3a3a3a" stroke-width="1.300" stroke-dasharray="3.400 1.700"/><path d="M7.500 0.500v8M4.500 5.800L7.500 8.800L10.500 5.800" fill="none" stroke="#3a3a3a" stroke-width="1.400"/><text x="12" y="17" font-size="13" font-weight="bold" fill="#333" font-family="Liberation Sans,sans-serif">?</text></svg><span class="a t" style="left:85.5px;top:948.0px;font-size:15px;line-height:21px;height:21px;color:#262626;letter-spacing:-0.04px;transform:scaleY(0.930);">辅助功能: 不可用</span><div class="a " style="left:669px;top:946px;width:50px;height:26px;background:#c6c6c6;"></div><svg class="a" style="left:686px;top:951px;" width="16" height="16" viewBox="0 0 16 16"><rect x="0.750" y="0.750" width="14.500" height="14" fill="#ddd" stroke="#666" stroke-width="1.500"/><path d="M0.750 5.500h14.500M0.750 10.200h14.500M5.600 0.750v14M10.400 0.750v14" stroke="#666" stroke-width="1.500"/></svg><svg class="a" style="left:735px;top:951px;" width="17" height="16" viewBox="0 0 17 16"><rect x="0.600" y="0.600" width="15.800" height="14.300" fill="#fff" stroke="#666" stroke-width="1.200"/><rect x="4" y="2.500" width="9" height="10.500" fill="#fff" stroke="#666" stroke-width="1"/><path d="M6 5.500h5M6 7.800h5M6 10.100h5" stroke="#666" stroke-width="1"/></svg><svg class="a" style="left:785px;top:951px;" width="17" height="16" viewBox="0 0 17 16"><rect x="0.600" y="0.600" width="15.800" height="14.300" fill="#fff" stroke="#666" stroke-width="1.200"/><path d="M5.500 0.600v8.400M11 0.600v8.400M0.600 9h15.800" fill="none" stroke="#666" stroke-width="1.200"/></svg><div class="a " style="left:826px;top:959px;width:9px;height:1.3px;background:#444;"></div><div class="a " style="left:842px;top:959px;width:125px;height:1px;background:#6a6a6a;"></div><div class="a " style="left:901.5px;top:952px;width:7px;height:14px;background:#555;"></div><div class="a " style="left:973px;top:959px;width:10px;height:1.3px;background:#444;"></div><div class="a " style="left:977.5px;top:954.5px;width:1.3px;height:10px;background:#444;"></div><span class="a t" style="left:1000px;top:949.0px;font-size:15px;line-height:21px;height:21px;color:#262626;letter-spacing:0.21px;">100%</span><span class="a t" style="left:879.5px;top:925.5px;font-size:17.5px;line-height:24px;height:24px;color:rgba(255,255,255,0.8);letter-spacing:0.09px;text-shadow:0 0 1px rgba(70,70,70,0.75),1px 1px 1px rgba(70,70,70,0.35);">@稀土掘金技术社区</span>
</div>
</body></html>
